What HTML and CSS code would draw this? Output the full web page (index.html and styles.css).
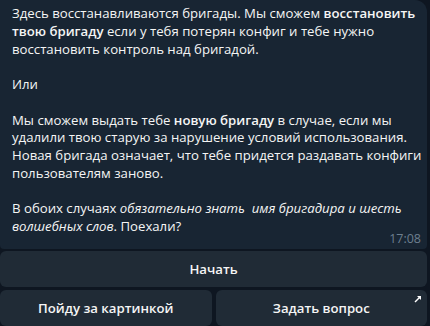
FILE: index.html
```html
<!DOCTYPE html>
<html lang="ru">
<head>
  <meta charset="UTF-8">
  <title>Бригады</title>
  <link rel="stylesheet" href="styles.css">
</head>
<body>
  <div class="chat">
    <div class="bubble">
      <p>Здесь восстанавливаются бригады. Мы сможем <b>восстановить</b><br><b>твою бригаду</b> если у тебя потерян конфиг и тебе нужно<br>восстановить контроль над бригадой.</p>
      <p>Или</p>
      <p>Мы сможем выдать тебе <b>новую бригаду</b> в случае, если мы<br>удалили твою старую за нарушение условий использования.<br>Новая бригада означает, что тебе придется раздавать конфиги<br>пользователям заново.</p>
      <p class="last">В обоих случаях <i>обязательно знать&nbsp; имя бригадира и шесть</i><br><i>волшебных слов</i>. Поехали?</p>
      <span class="time">17:08</span>
    </div>
    <div class="keyboard">
      <div class="row">
        <div class="btn">Начать</div>
      </div>
      <div class="row">
        <div class="btn">Пойду за картинкой</div>
        <div class="btn">Задать вопрос
          <svg class="arrow" width="8" height="8" viewBox="0 0 8 8"><path d="M1 7 L5.5 2.5" stroke="#fff" stroke-width="1.5"/><path d="M3 1 H7 V5 Z" fill="#fff"/></svg>
        </div>
      </div>
    </div>
  </div>
</body>
</html>
```

FILE: styles.css
```css
body{
  margin: 0;
  background-color: #0e1621;
  font-family: "Open Sans", "Noto Sans", sans-serif;
  font-size: 13.2px;
  color: #f5f5f5;
}
.chat{
  width: 427px;
}
.bubble{
  position: relative;
  background-color: #182533;
  border-radius: 0 12px 4px 4px;
  padding: 5px 10px 13px 12px;
  line-height: 17.75px;
  white-space: nowrap;
}
.bubble p{
  margin: 0 0 17.75px 0;
}
.bubble p.last{
  margin: 0;
}
.bubble b{
  font-weight: 600;
}
.time{
  position: absolute;
  right: 6px;
  bottom: 1px;
  font-size: 12.5px;
  color: #6d7f8f;
}
.keyboard{
  display: flex;
  flex-direction: column;
  gap: 3px;
  margin-top: 2px;
}
.row{
  display: flex;
  gap: 4px;
}
.btn{
  position: relative;
  flex: 1;
  height: 36px;
  display: flex;
  align-items: center;
  justify-content: center;
  background-color: #202b36;
  border-radius: 6px;
  font-weight: 600;
  color: #f5f5f5;
}
.arrow{
  position: absolute;
  top: 5px;
  right: 5px;
}
```
